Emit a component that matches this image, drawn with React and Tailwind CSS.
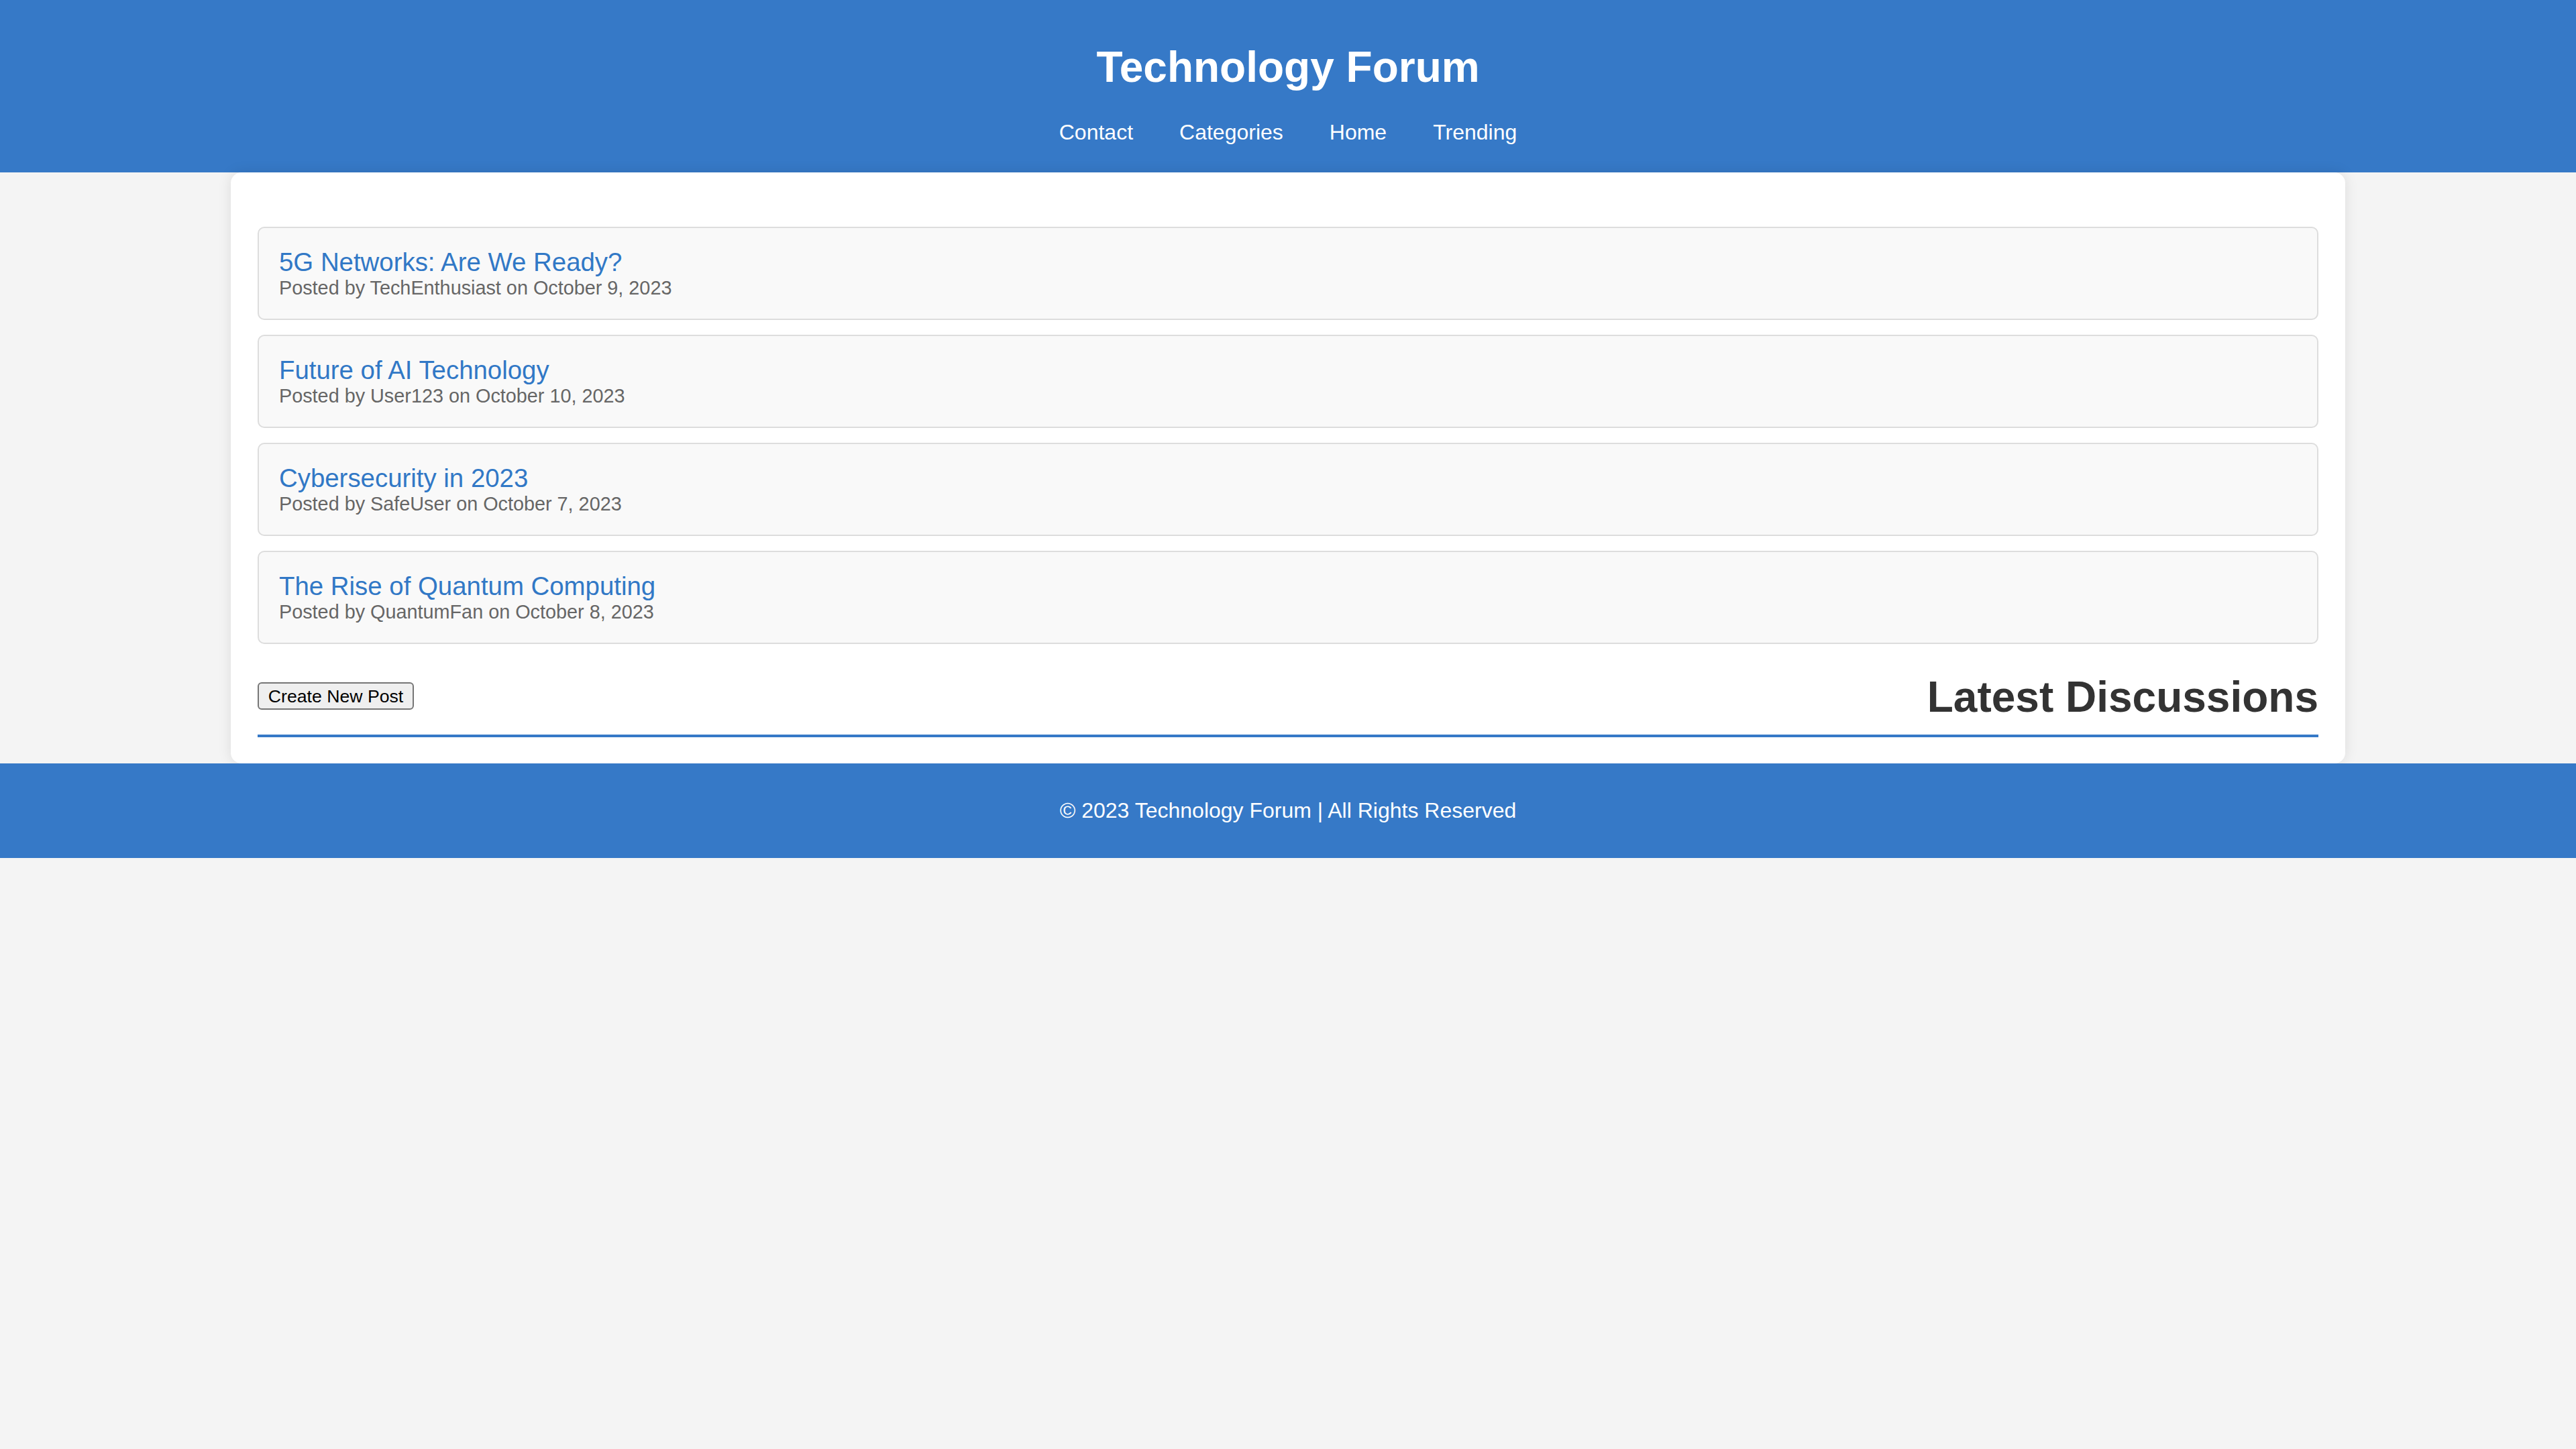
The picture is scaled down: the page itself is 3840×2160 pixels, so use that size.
import React from "react";

const posts = [
  { title: "5G Networks: Are We Ready?", author: "TechEnthusiast", date: "October 9, 2023" },
  { title: "Future of AI Technology", author: "User123", date: "October 10, 2023" },
  { title: "Cybersecurity in 2023", author: "SafeUser", date: "October 7, 2023" },
  { title: "The Rise of Quantum Computing", author: "QuantumFan", date: "October 8, 2023" },
];

export default function App() {
  return (
    <div className="min-h-screen bg-[#f4f4f4] font-['Liberation_Sans',Arial,sans-serif]">
      <header className="bg-[#3679c7] text-white text-center pt-[63px] pb-[41px]">
        <h1 className="text-[64px] font-bold leading-[74px]">Technology Forum</h1>
        <nav className="mt-[42px] flex justify-center gap-[69px] text-[32px] leading-[37px]">
          <a href="#">Contact</a>
          <a href="#">Categories</a>
          <a href="#">Home</a>
          <a href="#">Trending</a>
        </nav>
      </header>
      <main className="mx-auto w-[3152px] bg-white rounded-[16px] shadow-[0_0_20px_rgba(0,0,0,0.1)] pt-[81px] px-[40px] pb-[39px]">
        <div className="flex flex-col gap-[22px]">
          {posts.map((p) => (
            <div
              key={p.title}
              className="border-2 border-[#dddddd] rounded-[10px] bg-[#f9f9f9] pt-[29px] pb-[29px] px-[30px]"
            >
              <div className="text-[38.4px] leading-[44px] text-[#3178c6]">{p.title}</div>
              <div className="text-[28.8px] leading-[33px] text-[#666666]">
                Posted by {p.author} on {p.date}
              </div>
            </div>
          ))}
        </div>
        <div className="mt-[42px] flex justify-between items-start pb-[19px] border-b-4 border-[#3679c7]">
          <button className="mt-[15px] h-[41px] w-[233px] border-2 border-[#767676] rounded-[6px] bg-[#efefef] text-[26.67px] leading-[30px] text-black">
            Create New Post
          </button>
          <h2 className="text-[64px] font-bold leading-[74px] text-[#333333]">Latest Discussions</h2>
        </div>
      </main>
      <footer className="bg-[#3679c7] h-[141px] flex items-center justify-center text-white text-[32px] leading-[37px]">
        © 2023 Technology Forum | All Rights Reserved
      </footer>
    </div>
  );
}
